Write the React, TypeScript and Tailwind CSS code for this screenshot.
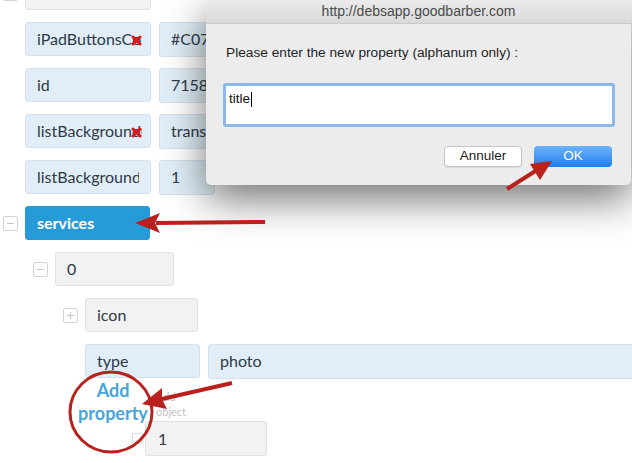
import React from "react";

type Row = {
  level: number;
  keyText: string;
  keyWidth: number;
  value?: string;
  valueWidth?: number;
  toggle?: "minus" | "plus" | "none";
  tone: "blue" | "gray" | "active";
  removable?: boolean;
};

const rows: Row[] = [
  { level: 0, keyText: "", keyWidth: 126, tone: "gray", toggle: "minus" },
  { level: 0, keyText: "iPadButtonsColor", keyWidth: 126, value: "#C07A3B", valueWidth: 56, tone: "blue", removable: true },
  { level: 0, keyText: "id", keyWidth: 126, value: "7158", valueWidth: 56, tone: "blue" },
  { level: 0, keyText: "listBackgroundColor", keyWidth: 126, value: "transparent", valueWidth: 56, tone: "blue", removable: true },
  { level: 0, keyText: "listBackgroundOpacity", keyWidth: 126, value: "1", valueWidth: 56, tone: "blue" },
  { level: 0, keyText: "services", keyWidth: 125, tone: "active", toggle: "minus" },
  { level: 1, keyText: "0", keyWidth: 119, tone: "gray", toggle: "minus" },
  { level: 2, keyText: "icon", keyWidth: 113, tone: "gray", toggle: "plus" },
  { level: 2, keyText: "type", keyWidth: 115, value: "photo", valueWidth: 440, tone: "blue", toggle: "none" },
];

const indent = ["pl-0", "pl-[30px]", "pl-[60px]"];

function Toggle({ kind }: { kind: "minus" | "plus" }) {
  return (
    <div className="relative ml-[3px] size-[15px] rounded-[2px] border border-[#d4d4d4] bg-white">
      <div className="absolute left-[3px] right-[3px] top-[6px] h-px bg-[#c8c8c8]" />
      {kind === "plus" && <div className="absolute top-[3px] bottom-[3px] left-[6px] w-px bg-[#c8c8c8]" />}
    </div>
  );
}

function RemoveMark() {
  return (
    <svg className="absolute right-[8px] top-[12px]" width="11" height="11" viewBox="0 0 11 11">
      <path d="M2 2 L9 9 M9 2 L2 9" stroke="#e3131b" strokeWidth="3" strokeLinecap="round" />
    </svg>
  );
}

function TreeRow({ row }: { row: Row }) {
  const box =
    row.tone === "active"
      ? "bg-[#269bd7] border-[#269bd7] text-white font-bold"
      : row.tone === "blue"
        ? "bg-[#e1eef7] border-[#d3e1eb] text-[#2e3a47]"
        : "bg-[#f2f2f2] border-[#e2e2e2] text-[#2e3a47]";
  return (
    <div className={`flex h-[34px] shrink-0 items-center ${indent[row.level]}`}>
      <div className="flex w-[25px] shrink-0 items-center">
        {row.toggle && row.toggle !== "none" && <Toggle kind={row.toggle} />}
      </div>
      <div
        className={`relative flex h-[34px] shrink-0 items-center overflow-hidden whitespace-nowrap rounded-[3px] border pl-[11px] text-[16px] ${box}`}
        style={{ width: row.keyWidth }}
      >
        <span className={row.removable ? "w-[105px] overflow-hidden" : "w-[102px] overflow-hidden"}>{row.keyText}</span>
        {row.removable && <RemoveMark />}
      </div>
      {row.value !== undefined && (
        <div
          className="ml-[8px] flex h-[35px] shrink-0 items-center overflow-hidden whitespace-nowrap rounded-[3px] border border-[#d3e1eb] bg-[#e1eef7] pl-[11px] text-[16px] text-[#2e3a47]"
          style={{ width: row.valueWidth }}
        >
          {row.value}
        </div>
      )}
    </div>
  );
}

function Dialog() {
  return (
    <div className="absolute left-[206px] top-0 h-[185px] w-[425px] rounded-b-[5px] bg-[#ececec] font-['Liberation_Sans',Arial,sans-serif] shadow-[0_14px_40px_rgba(0,0,0,0.55)]">
      <div className="flex h-[24px] items-center justify-center border-b border-[#c9c9c9] bg-gradient-to-b from-[#ebebeb] to-[#d9d9d9] text-[14px] text-[#4a4a4a]">
        http://debsapp.goodbarber.com
      </div>
      <div className="pl-[20px] pt-[21px] text-[13.7px] leading-[16px] text-[#1f1f1f]">
        Please enter the new property (alphanum only) :
      </div>
      <div className="ml-[17px] mt-[22px] h-[44px] w-[392px] rounded-[3px] border-[3px] border-[#8cb8ea] bg-white">
        <div className="flex items-center pl-[3px] pt-[5px] text-[13.5px] leading-[16px] text-[#111]">
          title
          <span className="ml-px h-[15px] w-px bg-black" />
        </div>
      </div>
      <div className="mt-[19px] flex justify-end gap-[12px] pr-[19px]">
        <div className="flex h-[21px] w-[78px] items-center justify-center rounded-[4px] border border-[#c4c4c4] bg-white text-[13.5px] text-[#222] shadow-[0_1px_1px_rgba(0,0,0,0.08)]">
          Annuler
        </div>
        <div className="flex h-[21px] w-[78px] items-center justify-center rounded-[4px] bg-gradient-to-b from-[#6cb3f8] to-[#1c7ef0] text-[13.5px] text-white">
          OK
        </div>
      </div>
    </div>
  );
}

function Annotations() {
  const red = "#b8211d";
  return (
    <svg className="pointer-events-none absolute inset-0" width="632" height="463" viewBox="0 0 632 463">
      <line x1="265" y1="222" x2="156" y2="223" stroke={red} strokeWidth="4" />
      <polygon points="135,223 160,213 155,223 160,233" fill={red} />
      <line x1="507" y1="189" x2="537" y2="170" stroke={red} strokeWidth="4" />
      <polygon points="552,161 540,180 535,172 530,164" fill={red} />
      <line x1="232" y1="383" x2="162" y2="399" stroke={red} strokeWidth="4" />
      <polygon points="142,404 167,409 162,399 162,388" fill={red} />
      <ellipse cx="111" cy="412" rx="41" ry="40" fill="none" stroke={red} strokeWidth="3" />
    </svg>
  );
}

export default function App() {
  return (
    <div className="relative h-[463px] w-[632px] overflow-hidden bg-white font-['Lato',sans-serif]">
      <div className="-mt-[24px] flex flex-col gap-[12px]">
        {rows.map((row, i) => (
          <TreeRow key={i} row={row} />
        ))}
      </div>
      <div className="flex pl-[75px] pt-px">
        <div className="w-[76px] text-center text-[18px] font-bold leading-[23px] text-[#45a6db]">
          Add
          <br />
          property
        </div>
        <div className="ml-[5px] mt-[10px] text-[11px] leading-[15px] text-[#c2c2c2]">
          Add
          <br />
          object
        </div>
      </div>
      <div className="-mt-[4px] flex items-center pl-[132px]">
        <div className="size-[11px] rounded-[2px] border border-[#d8d8d8] bg-white" />
        <div className="ml-[2px] flex h-[35px] w-[122px] items-center rounded-[3px] border border-[#e2e2e2] bg-[#f2f2f2] pl-[12px] text-[16px] text-[#2e3a47]">
          1
        </div>
      </div>
      <Dialog />
      <Annotations />
    </div>
  );
}
